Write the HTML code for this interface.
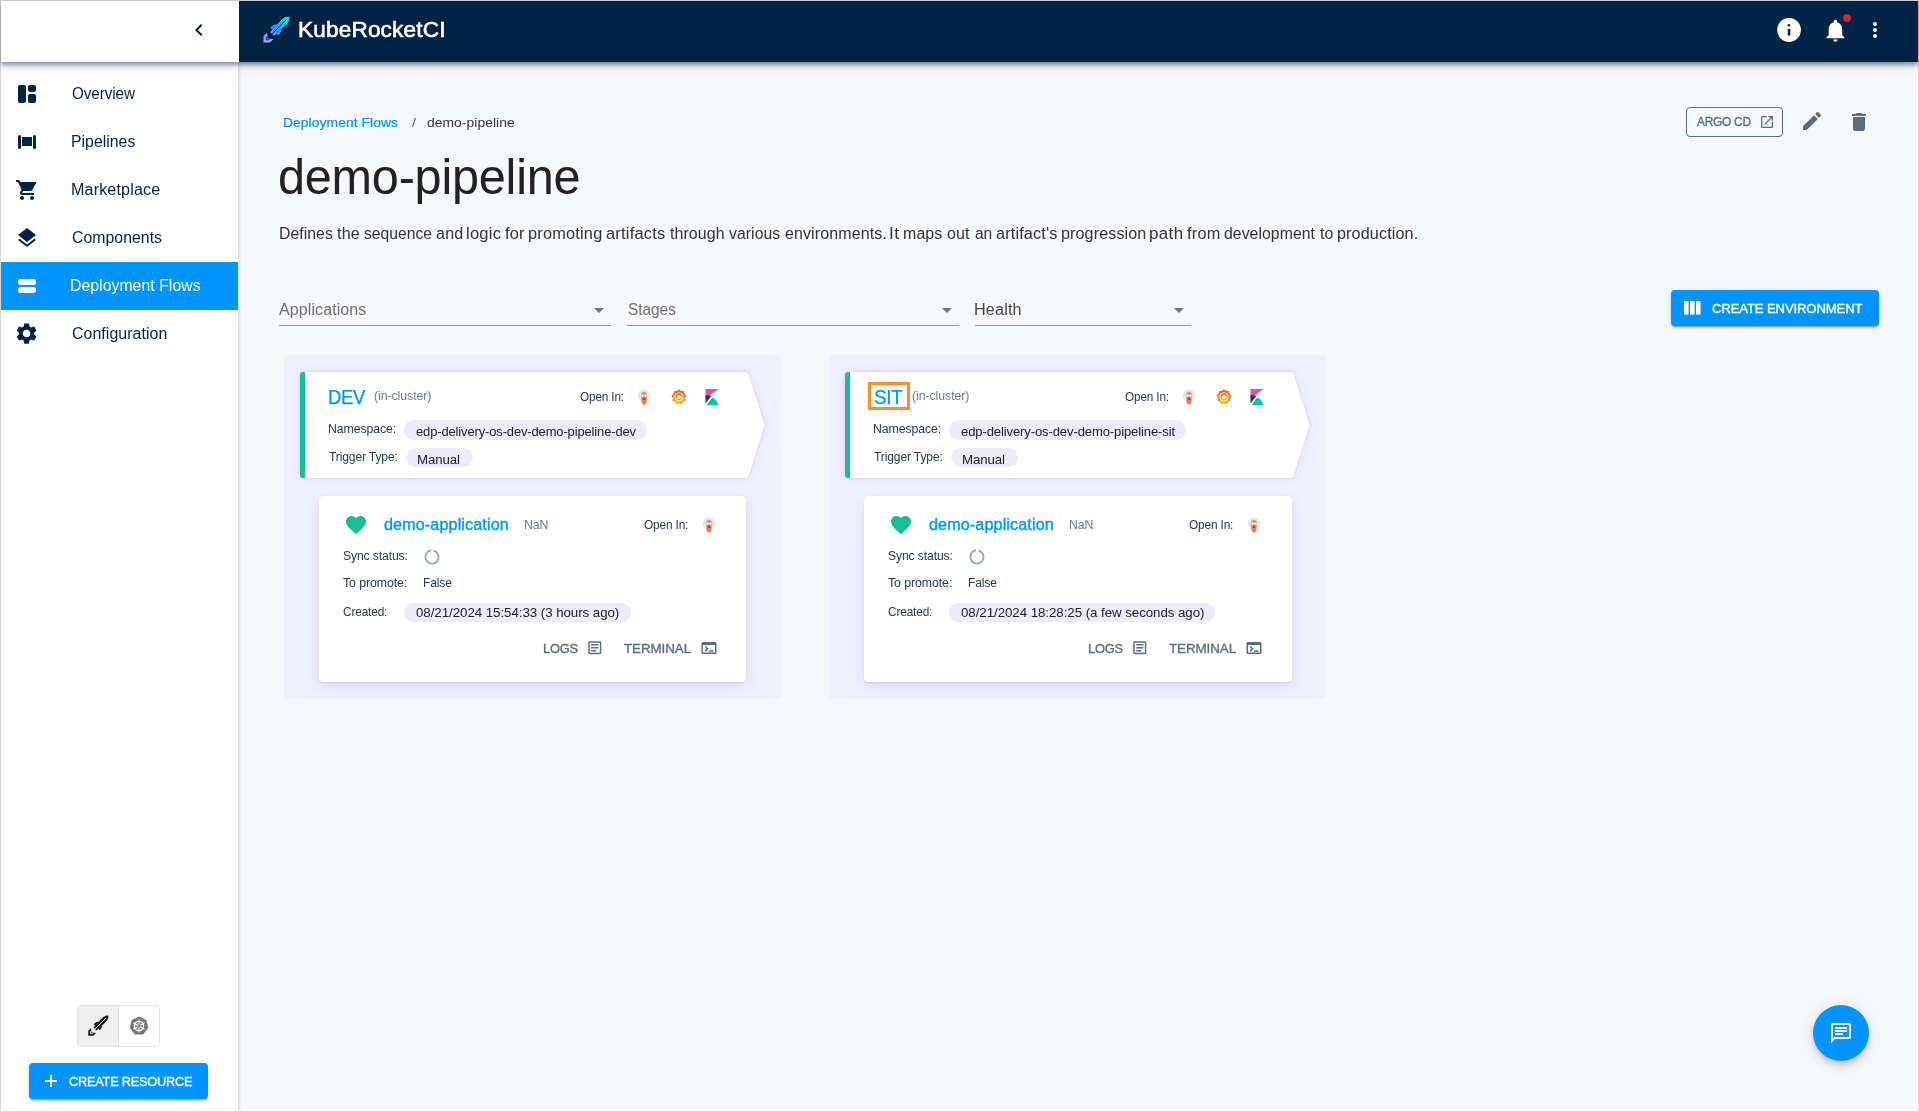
<!DOCTYPE html>
<html><head><meta charset="utf-8"><title>KubeRocketCI</title>
<style>
html,body{margin:0;padding:0}
body{width:1919px;height:1112px;position:relative;overflow:hidden;background:#d9d9d9;font-family:"Liberation Sans", sans-serif}
#frame{position:absolute;left:1px;top:1px;width:1917px;height:1110px;background:#f7f8fc;overflow:hidden}
.a{position:absolute}
.t{position:absolute;white-space:nowrap;font-family:"Liberation Sans", sans-serif}
svg{position:absolute;overflow:visible}
</style></head>
<body>
<div id="frame"></div>
<div class="a" style="left:1px;top:1px;width:237px;height:1110px;background:#fff;border-right:1px solid #e0e0e0"></div>
<div class="a" style="left:239px;top:62px;width:1px;height:1049px;background:#e8e9ee"></div><div class="a" style="left:240px;top:62px;width:1px;height:1049px;background:#f0f1f6"></div><div class="a" style="left:241px;top:62px;width:1px;height:1049px;background:#f5f6fb"></div>
<div class="a" style="left:1px;top:262px;width:237px;height:48px;background:#0094ff"></div>
<div class="a" style="left:1px;top:1px;width:1917px;height:61px;box-shadow:0px 3px 4px 0px rgba(1,25,60,0.35),0px 3px 10px 0px rgba(1,25,60,0.22);background:#fff"></div>
<div class="a" style="left:239px;top:1px;width:1679px;height:61px;background:#012345"></div>
<svg style="left:187px;top:18px" width="24" height="24" viewBox="0 0 24 24"><path fill="#012345" d="M15.41 7.41 14 6l-6 6 6 6 1.41-1.41L10.83 12z"/></svg>
<svg style="left:15px;top:82px" width="24" height="24" viewBox="0 0 24 24"><path fill="#012345" d="M9 21H5c-1.1 0-2-.9-2-2V5c0-1.1.9-2 2-2h4c1.1 0 2 .9 2 2v14c0 1.1-.9 2-2 2zm6 0h4c1.1 0 2-.9 2-2v-5c0-1.1-.9-2-2-2h-4c-1.1 0-2 .9-2 2v5c0 1.1.9 2 2 2zm6-13V5c0-1.1-.9-2-2-2h-4c-1.1 0-2 .9-2 2v3c0 1.1.9 2 2 2h4c1.1 0 2-.9 2-2z"/></svg>
<svg style="left:0px;top:0px" width="1" height="1" viewBox="0 0 1 1"></svg>
<div class="a" style="left:17.6px;top:135px;width:3px;height:14px;border-radius:1.5px;background:#012345"></div>
<div class="a" style="left:22.3px;top:137.4px;width:9.4px;height:9px;background:#012345"></div>
<div class="a" style="left:33.3px;top:135px;width:3px;height:14px;border-radius:1.5px;background:#012345"></div>
<svg style="left:15px;top:178px" width="24" height="24" viewBox="0 0 24 24"><path fill="#012345" d="M7 18c-1.1 0-1.99.9-1.99 2S5.9 22 7 22s2-.9 2-2-.9-2-2-2zM1 2v2h2l3.6 7.59-1.35 2.45c-.16.28-.25.61-.25.96 0 1.1.9 2 2 2h12v-2H7.42c-.14 0-.25-.11-.25-.25l.03-.12.9-1.63h7.45c.75 0 1.41-.41 1.75-1.03l3.58-6.49c.08-.14.12-.31.12-.48 0-.55-.45-1-1-1H5.21l-.94-2H1zm16 16c-1.1 0-1.99.9-1.99 2s.89 2 1.99 2 2-.9 2-2-.9-2-2-2z"/></svg>
<svg style="left:15px;top:226px" width="24" height="24" viewBox="0 0 24 24"><path fill="#012345" d="M11.99 18.54l-7.37-5.73L3 14.07l9 7 9-7-1.63-1.27-7.38 5.74zM12 16l7.36-5.73L21 9l-9-7-9 7 1.63 1.27L12 16z"/></svg>
<div class="a" style="left:18px;top:279px;width:18px;height:6px;border-radius:2.5px;background:#fff"></div>
<div class="a" style="left:18px;top:287px;width:18px;height:6px;border-radius:2.5px;background:#fff"></div>
<svg style="left:14.4px;top:321.4px" width="25.2" height="25.2" viewBox="0 0 24 24"><path fill="#012345" d="M19.14 12.94c.04-.3.06-.61.06-.94 0-.32-.02-.64-.07-.94l2.03-1.58c.18-.14.23-.41.12-.61l-1.92-3.32c-.12-.22-.37-.29-.59-.22l-2.39.96c-.5-.38-1.03-.7-1.62-.94l-.36-2.54c-.04-.24-.24-.41-.48-.41h-3.84c-.24 0-.43.17-.47.41l-.36 2.54c-.59.24-1.13.57-1.62.94l-2.39-.96c-.22-.08-.47 0-.59.22L2.74 8.87c-.12.21-.08.47.12.61l2.03 1.58c-.05.3-.09.63-.09.94s.02.64.07.94l-2.03 1.58c-.18.14-.23.41-.12.61l1.92 3.32c.12.22.37.29.59.22l2.39-.96c.5.38 1.03.7 1.62.94l.36 2.54c.05.24.24.41.48.41h3.84c.24 0 .44-.17.47-.41l.36-2.54c.59-.24 1.13-.56 1.62-.94l2.39.96c.22.08.47 0 .59-.22l1.92-3.32c.12-.22.07-.47-.12-.61l-2.01-1.58zM12 15.6c-1.98 0-3.6-1.62-3.6-3.6s1.62-3.6 3.6-3.6 3.6 1.62 3.6 3.6-1.62 3.6-3.6 3.6z"/></svg>
<div class="a" style="left:77px;top:1005px;width:81px;height:40px;border:1px solid #e4e5ea;border-radius:4px;overflow:hidden;background:#fff"><div class="a" style="left:0;top:0;width:40px;height:40px;background:#eeeeee;border-right:1px solid #dcdde3"></div></div>
<svg style="left:80px;top:1008px" width="36" height="36" viewBox="0 0 36 36">
<g transform="translate(18 18) rotate(45) scale(0.78)">
<path d="M0 -18.5 C3 -17 3.6 -13 3.4 -9 L2.8 5.5 L-2.8 5.5 L-3.4 -9 C-3.6 -13 -3 -17 0 -18.5Z" fill="#1a1a1a"/>
<path d="M-2.8 -4.5 C-5 -3.5 -5.6 -0.5 -5.4 2.5 L-2.8 2Z M2.8 -4.5 C5 -3.5 5.6 -0.5 5.4 2.5 L2.8 2Z" fill="#1a1a1a"/>
<path d="M0 -14.5 L0 7" stroke="#efefef" stroke-width="1.1"/>
<path d="M-4.6 8 L-4.6 13 L0 17.8 L4.6 13 L4.6 8 L0 12Z" fill="#1a1a1a"/>
<path d="M-2.2 11.5 L0 13.8 L2.2 11.5" stroke="#efefef" stroke-width="1" fill="none"/>
</g></svg>
<svg style="left:129px;top:1016px" width="20" height="20" viewBox="0 0 20 20">
<polygon points="10,0.5 17.4,4.1 19.2,12.1 14.1,18.5 5.9,18.5 0.8,12.1 2.6,4.1" fill="#777"/>
<circle cx="10" cy="10" r="4.6" fill="none" stroke="#fff" stroke-width="1.3"/>
<g stroke="#fff" stroke-width="1.1"><line x1="10" y1="3.6" x2="10" y2="16.4"/><line x1="4.5" y1="6.8" x2="15.5" y2="13.2"/><line x1="4.5" y1="13.2" x2="15.5" y2="6.8"/></g>
<circle cx="10" cy="10" r="1.4" fill="#777"/>
</svg>
<div class="a" style="left:29px;top:1063px;width:179px;height:36px;border-radius:4px;background:#0094ff;box-shadow:0px 3px 1px -2px rgba(0,0,0,0.2),0px 2px 2px 0px rgba(0,0,0,0.14),0px 1px 5px 0px rgba(0,0,0,0.12)"></div>
<div class="a" style="left:45px;top:1080.2px;width:12px;height:1.8px;background:#fff"></div>
<div class="a" style="left:50.1px;top:1075px;width:1.8px;height:12px;background:#fff"></div>
<svg style="left:258px;top:12px" width="36" height="36" viewBox="0 0 36 36">
<defs><linearGradient id="rg" gradientUnits="userSpaceOnUse" x1="0" y1="18" x2="0" y2="-18"><stop offset="0" stop-color="#b59cf2"/><stop offset="0.3" stop-color="#8f95ff"/><stop offset="0.5" stop-color="#2f8dff"/><stop offset="1" stop-color="#00ecff"/></linearGradient></defs>
<g transform="translate(18 18) rotate(45)">
<path d="M0 -18.5 C3 -17 3.6 -13 3.4 -9 L2.8 5.5 L-2.8 5.5 L-3.4 -9 C-3.6 -13 -3 -17 0 -18.5Z" fill="url(#rg)"/>
<path d="M-2.8 -4.5 C-5 -3.5 -5.6 -0.5 -5.4 2.5 L-2.8 2Z M2.8 -4.5 C5 -3.5 5.6 -0.5 5.4 2.5 L2.8 2Z" fill="url(#rg)"/>
<path d="M0 -14.5 L0 7" stroke="#012345" stroke-width="0.9"/>
<path d="M-4.6 8 L-4.6 13 L0 17.8 L4.6 13 L4.6 8 L0 12Z" fill="url(#rg)"/>
<path d="M-2.2 11.5 L0 13.8 L2.2 11.5" stroke="#012345" stroke-width="0.9" fill="none"/>
</g></svg>
<svg style="left:1777px;top:18px" width="24" height="24" viewBox="0 0 24 24"><circle cx="12" cy="12" r="11.9" fill="#fff"/><circle cx="12" cy="7.3" r="1.3" fill="#012345"/><rect x="10.8" y="11" width="2.5" height="6.6" fill="#012345"/></svg>
<svg style="left:1821.6px;top:16.9px" width="26.9" height="26.9" viewBox="0 0 24 24"><path fill="#fff" d="M12 22c1.1 0 2-.9 2-2h-4c0 1.1.89 2 2 2zm6-6v-5c0-3.07-1.64-5.64-4.5-6.32V4c0-.83-.67-1.5-1.5-1.5s-1.5.67-1.5 1.5v.68C7.63 5.36 6 7.92 6 11v5l-2 2v1h16v-1l-2-2z"/></svg>
<div class="a" style="left:1843px;top:14px;width:8px;height:8px;border-radius:50%;background:#c9282d"></div>
<svg style="left:1863px;top:18px" width="24" height="24" viewBox="0 0 24 24"><path fill="#fff" d="M12 8c1.1 0 2-.9 2-2s-.9-2-2-2-2 .9-2 2 .9 2 2 2zm0 2c-1.1 0-2 .9-2 2s.9 2 2 2 2-.9 2-2-.9-2-2-2zm0 6c-1.1 0-2 .9-2 2s.9 2 2 2 2-.9 2-2-.9-2-2-2z"/></svg>
<div class="a" style="left:1686px;top:107px;width:95px;height:28px;border:1px solid #596d80;border-radius:4px"></div>
<svg style="left:1759px;top:113.7px" width="16" height="16" viewBox="0 0 24 24"><path fill="#596d80" d="M19 19H5V5h7V3H5c-1.11 0-2 .9-2 2v14c0 1.1.89 2 2 2h14c1.1 0 2-.9 2-2v-7h-2v7zM14 3v2h3.59l-9.83 9.83 1.41 1.41L19 6.41V10h2V3h-7z"/></svg>
<svg style="left:1799.5px;top:109px" width="24" height="24" viewBox="0 0 24 24"><path fill="#596d80" d="M3 17.46v3.04c0 .28.22.5.5.5h3.04c.13 0 .26-.05.35-.15L17.81 9.94l-3.75-3.75L3.15 17.1c-.1.1-.15.22-.15.36zM20.71 7.04c.39-.39.39-1.02 0-1.41l-2.34-2.34a.9959.9959 0 0 0-1.41 0l-1.83 1.83 3.75 3.75 1.83-1.83z"/></svg>
<svg style="left:1847px;top:110px" width="24" height="24" viewBox="0 0 24 24"><path fill="#596d80" d="M6 19c0 1.1.9 2 2 2h8c1.1 0 2-.9 2-2V7H6v12zM19 4h-3.5l-1-1h-5l-1 1H5v2h14V4z"/></svg>
<div class="a" style="left:279px;top:325px;width:332px;height:1px;background:#9a9a9a"></div>
<svg style="left:587.3px;top:298px" width="24" height="24" viewBox="0 0 24 24"><path fill="#757575" d="M7 10l5 5 5-5z"/></svg>
<div class="a" style="left:627px;top:325px;width:332px;height:1px;background:#9a9a9a"></div>
<svg style="left:934.9px;top:298px" width="24" height="24" viewBox="0 0 24 24"><path fill="#757575" d="M7 10l5 5 5-5z"/></svg>
<div class="a" style="left:975px;top:325px;width:216px;height:1px;background:#9a9a9a"></div>
<svg style="left:1167.3px;top:298px" width="24" height="24" viewBox="0 0 24 24"><path fill="#757575" d="M7 10l5 5 5-5z"/></svg>
<div class="a" style="left:1671px;top:290px;width:208px;height:36px;border-radius:4px;background:#0094ff;box-shadow:0px 3px 1px -2px rgba(0,0,0,0.2),0px 2px 2px 0px rgba(0,0,0,0.14),0px 1px 5px 0px rgba(0,0,0,0.12)"></div>
<svg style="left:1684.4px;top:301px" width="16.6" height="13.7" viewBox="0 0 16.6 13.7"><rect x="0" y="0" width="4.6" height="13.7" rx="1" fill="#fff"/><rect x="6" y="0" width="4.6" height="13.7" fill="#fff"/><rect x="12" y="0" width="4.6" height="13.7" rx="1" fill="#fff"/></svg>
<div class="a" style="left:1813px;top:1005px;width:56px;height:56px;border-radius:50%;background:#0094ff;box-shadow:0px 3px 5px -1px rgba(0,0,0,0.14),0px 6px 10px 0px rgba(0,0,0,0.10),0px 1px 18px 0px rgba(0,0,0,0.08)"></div>
<svg style="left:1829px;top:1021px" width="24" height="24" viewBox="0 0 24 24"><path fill="#fff" d="M4 4h16v12H5.17L4 17.17V4m0-2c-1.1 0-1.99.9-1.99 2L2 22l4-4h14c1.1 0 2-.9 2-2V4c0-1.1-.9-2-2-2H4zm2 10h8v2H6v-2zm0-3h12v2H6V9zm0-3h12v2H6V6z"/></svg>
<div class="a" style="left:284px;top:355px;width:497px;height:344px;background:#f0efff;border-radius:4px"></div>
<svg style="left:300px;top:372px;filter:drop-shadow(0px 0px 1px rgba(0,0,0,0.13)) drop-shadow(0px 0px 6px rgba(90,80,210,0.10))" width="465" height="106" viewBox="0 0 465 106">
<path d="M3 0 L445 0 Q448 0 449 3 L464 51 Q465 53 464 55 L449 103 Q448 106 445 106 L3 106 Q0 106 0 103 L0 3 Q0 0 3 0Z" fill="#fff"/>
<path d="M3 0 L5 0 L5 106 L3 106 Q0 106 0 103 L0 3 Q0 0 3 0Z" fill="#18bf94"/>
</svg>
<svg style="left:637px;top:388.5px" width="14" height="16" viewBox="0 0 14 16">
<circle cx="7" cy="6.5" r="6.2" fill="#d7ecf7"/>
<path d="M4.2 5 C4.2 2.6 9.8 2.6 9.8 5 L9.6 11 C9.6 13 8.6 15.8 7 15.8 C5.4 15.8 4.4 13 4.4 11Z" fill="#ef7b4d"/>
<circle cx="5.6" cy="6.6" r="1.3" fill="#fff"/><circle cx="8.4" cy="6.6" r="1.3" fill="#fff"/>
<ellipse cx="7" cy="10" rx="1" ry="0.7" fill="#3b2a25"/>
</svg>
<svg style="left:670.5px;top:389px" width="16" height="16" viewBox="0 0 16 16">
<defs><linearGradient id="gg670.5" x1="0" y1="0" x2="0" y2="1"><stop offset="0" stop-color="#f05a28"/><stop offset="1" stop-color="#fbb80a"/></linearGradient></defs>
<polygon points="8.00,0.30 10.15,2.08 12.95,2.10 13.46,4.85 15.58,6.66 14.20,9.09 14.67,11.85 12.05,12.83 10.63,15.24 8.00,14.30 5.37,15.24 3.95,12.83 1.33,11.85 1.80,9.09 0.42,6.66 2.54,4.85 3.05,2.10 5.85,2.08" fill="url(#gg670.5)"/>
<circle cx="8" cy="8" r="4.6" fill="#fff"/>
<path d="M10.6 6.6 A2.9 2.9 0 1 0 10.9 8.6" stroke="url(#gg670.5)" stroke-width="1.6" fill="none"/>
<path d="M12.7 6.2 L10.2 7.4 L11.4 9Z" fill="url(#gg670.5)"/>
<circle cx="8" cy="8" r="0.9" fill="#fff"/>
</svg>
<svg style="left:704.5px;top:389px" width="14" height="16" viewBox="0 0 14 16">
<polygon points="0.5,0 13.5,0 0.5,9.6" fill="#f04e98"/>
<polygon points="0.5,6 6.6,6.8 0.5,14.6" fill="#343741"/>
<path d="M1.6 16 L7.3 8.6 C10 9.6 12.2 12 13.2 16Z" fill="#00bfb3"/>
</svg>
<div class="a" style="left:404.4px;top:420.4px;width:243px;height:19.4px;border-radius:10px;background:#ecebfb"></div>
<div class="a" style="left:406.2px;top:448.3px;width:66.5px;height:19.2px;border-radius:10px;background:#ecebfb"></div>
<div class="a" style="left:319px;top:496px;width:427px;height:186px;background:#fff;border-radius:4px;box-shadow:0 0 1px rgba(0,0,0,0.14),0 2px 2px -1px rgba(0,0,0,0.08),0 4px 12px rgba(80,70,190,0.13)"></div>
<svg style="left:343.5px;top:513px" width="24" height="24" viewBox="0 0 24 24"><path fill="#18bf94" d="m12 21.35-1.45-1.32C5.4 15.36 2 12.28 2 8.5 2 5.42 4.42 3 7.5 3c1.74 0 3.41.81 4.5 2.09C13.09 3.81 14.76 3 16.5 3 19.58 3 22 5.42 22 8.5c0 3.78-3.4 6.86-8.55 11.54L12 21.35z"/></svg>
<svg style="left:702px;top:516.5px" width="14" height="16" viewBox="0 0 14 16">
<circle cx="7" cy="6.5" r="6.2" fill="#d7ecf7"/>
<path d="M4.2 5 C4.2 2.6 9.8 2.6 9.8 5 L9.6 11 C9.6 13 8.6 15.8 7 15.8 C5.4 15.8 4.4 13 4.4 11Z" fill="#ef7b4d"/>
<circle cx="5.6" cy="6.6" r="1.3" fill="#fff"/><circle cx="8.4" cy="6.6" r="1.3" fill="#fff"/>
<ellipse cx="7" cy="10" rx="1" ry="0.7" fill="#3b2a25"/>
</svg>
<svg style="left:424px;top:548.5px" width="16" height="16" viewBox="0 0 16 16"><circle cx="8" cy="8" r="6.6" fill="none" stroke="#9aa3b0" stroke-width="1.8" stroke-dasharray="38.5 3" transform="rotate(-75 8 8)"/></svg>
<div class="a" style="left:403.9px;top:602.5px;width:227px;height:19.5px;border-radius:10px;background:#ecebfb"></div>
<svg style="left:586.3px;top:639.2px" width="17.5" height="17.5" viewBox="0 0 24 24"><path fill="#596d80" d="M19 3H5c-1.1 0-2 .9-2 2v14c0 1.1.9 2 2 2h14c1.1 0 2-.9 2-2V5c0-1.1-.9-2-2-2zm0 16H5V5h14v14zM7 7h10v2H7zm0 4h10v2H7zm0 4h7v2H7z"/></svg>
<svg style="left:700.2px;top:638.9px" width="18" height="18" viewBox="0 0 24 24"><path fill="#596d80" d="M20 4H4c-1.11 0-2 .9-2 2v12c0 1.1.89 2 2 2h16c1.1 0 2-.9 2-2V6c0-1.1-.89-2-2-2zm0 14H4V8h16v10zm-2-1h-6v-2h6v2zM7.5 17l-1.41-1.41L8.67 13l-2.59-2.59L7.5 9l4 4-4 4z"/></svg>
<div class="a" style="left:829px;top:355px;width:497px;height:344px;background:#f0efff;border-radius:4px"></div>
<svg style="left:845px;top:372px;filter:drop-shadow(0px 0px 1px rgba(0,0,0,0.13)) drop-shadow(0px 0px 6px rgba(90,80,210,0.10))" width="465" height="106" viewBox="0 0 465 106">
<path d="M3 0 L445 0 Q448 0 449 3 L464 51 Q465 53 464 55 L449 103 Q448 106 445 106 L3 106 Q0 106 0 103 L0 3 Q0 0 3 0Z" fill="#fff"/>
<path d="M3 0 L5 0 L5 106 L3 106 Q0 106 0 103 L0 3 Q0 0 3 0Z" fill="#18bf94"/>
</svg>
<svg style="left:1182px;top:388.5px" width="14" height="16" viewBox="0 0 14 16">
<circle cx="7" cy="6.5" r="6.2" fill="#d7ecf7"/>
<path d="M4.2 5 C4.2 2.6 9.8 2.6 9.8 5 L9.6 11 C9.6 13 8.6 15.8 7 15.8 C5.4 15.8 4.4 13 4.4 11Z" fill="#ef7b4d"/>
<circle cx="5.6" cy="6.6" r="1.3" fill="#fff"/><circle cx="8.4" cy="6.6" r="1.3" fill="#fff"/>
<ellipse cx="7" cy="10" rx="1" ry="0.7" fill="#3b2a25"/>
</svg>
<svg style="left:1215.5px;top:389px" width="16" height="16" viewBox="0 0 16 16">
<defs><linearGradient id="gg1215.5" x1="0" y1="0" x2="0" y2="1"><stop offset="0" stop-color="#f05a28"/><stop offset="1" stop-color="#fbb80a"/></linearGradient></defs>
<polygon points="8.00,0.30 10.15,2.08 12.95,2.10 13.46,4.85 15.58,6.66 14.20,9.09 14.67,11.85 12.05,12.83 10.63,15.24 8.00,14.30 5.37,15.24 3.95,12.83 1.33,11.85 1.80,9.09 0.42,6.66 2.54,4.85 3.05,2.10 5.85,2.08" fill="url(#gg1215.5)"/>
<circle cx="8" cy="8" r="4.6" fill="#fff"/>
<path d="M10.6 6.6 A2.9 2.9 0 1 0 10.9 8.6" stroke="url(#gg1215.5)" stroke-width="1.6" fill="none"/>
<path d="M12.7 6.2 L10.2 7.4 L11.4 9Z" fill="url(#gg1215.5)"/>
<circle cx="8" cy="8" r="0.9" fill="#fff"/>
</svg>
<svg style="left:1249.5px;top:389px" width="14" height="16" viewBox="0 0 14 16">
<polygon points="0.5,0 13.5,0 0.5,9.6" fill="#f04e98"/>
<polygon points="0.5,6 6.6,6.8 0.5,14.6" fill="#343741"/>
<path d="M1.6 16 L7.3 8.6 C10 9.6 12.2 12 13.2 16Z" fill="#00bfb3"/>
</svg>
<div class="a" style="left:949.4px;top:420.4px;width:237px;height:19.4px;border-radius:10px;background:#ecebfb"></div>
<div class="a" style="left:951.2px;top:448.3px;width:66.5px;height:19.2px;border-radius:10px;background:#ecebfb"></div>
<div class="a" style="left:864px;top:496px;width:428px;height:186px;background:#fff;border-radius:4px;box-shadow:0 0 1px rgba(0,0,0,0.14),0 2px 2px -1px rgba(0,0,0,0.08),0 4px 12px rgba(80,70,190,0.13)"></div>
<svg style="left:888.5px;top:513px" width="24" height="24" viewBox="0 0 24 24"><path fill="#18bf94" d="m12 21.35-1.45-1.32C5.4 15.36 2 12.28 2 8.5 2 5.42 4.42 3 7.5 3c1.74 0 3.41.81 4.5 2.09C13.09 3.81 14.76 3 16.5 3 19.58 3 22 5.42 22 8.5c0 3.78-3.4 6.86-8.55 11.54L12 21.35z"/></svg>
<svg style="left:1247px;top:516.5px" width="14" height="16" viewBox="0 0 14 16">
<circle cx="7" cy="6.5" r="6.2" fill="#d7ecf7"/>
<path d="M4.2 5 C4.2 2.6 9.8 2.6 9.8 5 L9.6 11 C9.6 13 8.6 15.8 7 15.8 C5.4 15.8 4.4 13 4.4 11Z" fill="#ef7b4d"/>
<circle cx="5.6" cy="6.6" r="1.3" fill="#fff"/><circle cx="8.4" cy="6.6" r="1.3" fill="#fff"/>
<ellipse cx="7" cy="10" rx="1" ry="0.7" fill="#3b2a25"/>
</svg>
<svg style="left:969px;top:548.5px" width="16" height="16" viewBox="0 0 16 16"><circle cx="8" cy="8" r="6.6" fill="none" stroke="#9aa3b0" stroke-width="1.8" stroke-dasharray="38.5 3" transform="rotate(-75 8 8)"/></svg>
<div class="a" style="left:948.9px;top:602.5px;width:266.4px;height:19.5px;border-radius:10px;background:#ecebfb"></div>
<svg style="left:1131.3px;top:639.2px" width="17.5" height="17.5" viewBox="0 0 24 24"><path fill="#596d80" d="M19 3H5c-1.1 0-2 .9-2 2v14c0 1.1.9 2 2 2h14c1.1 0 2-.9 2-2V5c0-1.1-.9-2-2-2zm0 16H5V5h14v14zM7 7h10v2H7zm0 4h10v2H7zm0 4h7v2H7z"/></svg>
<svg style="left:1245.2px;top:638.9px" width="18" height="18" viewBox="0 0 24 24"><path fill="#596d80" d="M20 4H4c-1.11 0-2 .9-2 2v12c0 1.1.89 2 2 2h16c1.1 0 2-.9 2-2V6c0-1.1-.89-2-2-2zm0 14H4V8h16v10zm-2-1h-6v-2h6v2zM7.5 17l-1.41-1.41L8.67 13l-2.59-2.59L7.5 9l4 4-4 4z"/></svg>
<div class="a" style="left:868px;top:382px;width:35.5px;height:22.3px;border:3px solid #f7902a"></div>
<div class="t" style="left:71.60px;top:86.00px;font-size:15.6px;line-height:15.6px;font-weight:400;color:#012345;letter-spacing:-0.090px;transform:scaleX(0.9773);transform-origin:0 0;">Overview</div>
<div class="t" style="left:70.59px;top:134.00px;font-size:15.6px;line-height:15.6px;font-weight:400;color:#012345;letter-spacing:0.038px;transform:scaleX(1.0114);transform-origin:0 0;">Pipelines</div>
<div class="t" style="left:70.57px;top:182.00px;font-size:15.6px;line-height:15.6px;font-weight:400;color:#012345;letter-spacing:0.126px;transform:scaleX(1.0345);transform-origin:0 0;">Marketplace</div>
<div class="t" style="left:71.60px;top:230.00px;font-size:15.6px;line-height:15.6px;font-weight:400;color:#012345;letter-spacing:0.053px;transform:scaleX(1.0125);transform-origin:0 0;">Components</div>
<div class="t" style="left:71.60px;top:326.00px;font-size:15.6px;line-height:15.6px;font-weight:400;color:#012345;letter-spacing:0.065px;transform:scaleX(1.0194);transform-origin:0 0;">Configuration</div>
<div class="t" style="left:70.49px;top:278.00px;font-size:15.6px;line-height:15.6px;font-weight:400;color:#ffffff;letter-spacing:0.046px;transform:scaleX(1.0125);transform-origin:0 0;">Deployment Flows</div>
<div class="t" style="left:68.80px;top:1075.30px;font-size:13.65px;line-height:13.65px;font-weight:400;color:#ffffff;letter-spacing:-0.251px;transform:scaleX(0.9365);transform-origin:0 0;-webkit-text-stroke:0.35px #ffffff;">CREATE RESOURCE</div>
<div class="t" style="left:297.72px;top:19.30px;font-size:21.94px;line-height:21.94px;font-weight:400;color:#ffffff;letter-spacing:0.163px;transform:scaleX(1.0294);transform-origin:0 0;-webkit-text-stroke:0.6px #fff;">KubeRocketCI</div>
<div class="t" style="left:283.38px;top:115.50px;font-size:13.65px;line-height:13.65px;font-weight:400;color:#0094ff;letter-spacing:0.055px;transform:scaleX(1.0171);transform-origin:0 0;-webkit-text-stroke:0.2px #0094ff;">Deployment Flows</div>
<div class="t" style="left:412.40px;top:115.50px;font-size:13.65px;line-height:13.65px;font-weight:400;color:#555555;letter-spacing:0.000px;transform:scaleX(1.0001);transform-origin:0 0;">/</div>
<div class="t" style="left:427.40px;top:115.50px;font-size:13.65px;line-height:13.65px;font-weight:400;color:#333333;letter-spacing:0.048px;transform:scaleX(1.0156);transform-origin:0 0;">demo-pipeline</div>
<div class="t" style="left:278.34px;top:153.20px;font-size:49.73px;line-height:49.73px;font-weight:400;color:#222222;letter-spacing:-0.241px;transform:scaleX(0.9777);transform-origin:0 0;">demo-pipeline</div>
<div class="t" style="left:278.59px;top:225.80px;font-size:15.6px;line-height:15.6px;font-weight:400;color:#333333;letter-spacing:0.047px;transform:scaleX(1.0124);transform-origin:0 0;">Defines</div>
<div class="t" style="left:337.20px;top:225.80px;font-size:15.6px;line-height:15.6px;font-weight:400;color:#333333;letter-spacing:0.152px;transform:scaleX(1.0329);transform-origin:0 0;">the</div>
<div class="t" style="left:363.80px;top:225.80px;font-size:15.6px;line-height:15.6px;font-weight:400;color:#333333;letter-spacing:0.015px;transform:scaleX(1.0036);transform-origin:0 0;">sequence</div>
<div class="t" style="left:435.70px;top:225.80px;font-size:15.6px;line-height:15.6px;font-weight:400;color:#333333;letter-spacing:0.176px;transform:scaleX(1.0317);transform-origin:0 0;">and</div>
<div class="t" style="left:465.74px;top:225.80px;font-size:15.6px;line-height:15.6px;font-weight:400;color:#333333;letter-spacing:0.210px;transform:scaleX(1.0602);transform-origin:0 0;">logic</div>
<div class="t" style="left:505.40px;top:225.80px;font-size:15.6px;line-height:15.6px;font-weight:400;color:#333333;letter-spacing:0.199px;transform:scaleX(1.0498);transform-origin:0 0;">for</div>
<div class="t" style="left:528.25px;top:225.80px;font-size:15.6px;line-height:15.6px;font-weight:400;color:#333333;letter-spacing:0.182px;transform:scaleX(1.0484);transform-origin:0 0;">promoting</div>
<div class="t" style="left:606.30px;top:225.80px;font-size:15.6px;line-height:15.6px;font-weight:400;color:#333333;letter-spacing:0.174px;transform:scaleX(1.0568);transform-origin:0 0;">artifacts</div>
<div class="t" style="left:670.20px;top:225.80px;font-size:15.6px;line-height:15.6px;font-weight:400;color:#333333;letter-spacing:0.085px;transform:scaleX(1.0225);transform-origin:0 0;">through</div>
<div class="t" style="left:728.70px;top:225.80px;font-size:15.6px;line-height:15.6px;font-weight:400;color:#333333;letter-spacing:0.047px;transform:scaleX(1.0128);transform-origin:0 0;">various</div>
<div class="t" style="left:784.70px;top:225.80px;font-size:15.6px;line-height:15.6px;font-weight:400;color:#333333;letter-spacing:0.096px;transform:scaleX(1.0273);transform-origin:0 0;">environments.</div>
<div class="t" style="left:888.60px;top:225.80px;font-size:15.6px;line-height:15.6px;font-weight:400;color:#333333;letter-spacing:0.399px;transform:scaleX(1.1042);transform-origin:0 0;">It</div>
<div class="t" style="left:902.88px;top:225.80px;font-size:15.6px;line-height:15.6px;font-weight:400;color:#333333;letter-spacing:0.118px;transform:scaleX(1.0217);transform-origin:0 0;">maps</div>
<div class="t" style="left:947.00px;top:225.80px;font-size:15.6px;line-height:15.6px;font-weight:400;color:#333333;letter-spacing:0.130px;transform:scaleX(1.0266);transform-origin:0 0;">out</div>
<div class="t" style="left:974.80px;top:225.80px;font-size:15.6px;line-height:15.6px;font-weight:400;color:#333333;letter-spacing:-0.022px;transform:scaleX(0.9970);transform-origin:0 0;">an</div>
<div class="t" style="left:996.00px;top:225.80px;font-size:15.6px;line-height:15.6px;font-weight:400;color:#333333;letter-spacing:0.127px;transform:scaleX(1.0447);transform-origin:0 0;">artifact&#x27;s</div>
<div class="t" style="left:1061.07px;top:225.80px;font-size:15.6px;line-height:15.6px;font-weight:400;color:#333333;letter-spacing:0.113px;transform:scaleX(1.0322);transform-origin:0 0;">progression</div>
<div class="t" style="left:1149.12px;top:225.80px;font-size:15.6px;line-height:15.6px;font-weight:400;color:#333333;letter-spacing:0.367px;transform:scaleX(1.0845);transform-origin:0 0;">path</div>
<div class="t" style="left:1187.00px;top:225.80px;font-size:15.6px;line-height:15.6px;font-weight:400;color:#333333;letter-spacing:0.205px;transform:scaleX(1.0460);transform-origin:0 0;">from</div>
<div class="t" style="left:1223.80px;top:225.80px;font-size:15.6px;line-height:15.6px;font-weight:400;color:#333333;letter-spacing:0.050px;transform:scaleX(1.0127);transform-origin:0 0;">development</div>
<div class="t" style="left:1320.00px;top:225.80px;font-size:15.6px;line-height:15.6px;font-weight:400;color:#333333;letter-spacing:0.111px;transform:scaleX(1.0192);transform-origin:0 0;">to</div>
<div class="t" style="left:1337.26px;top:225.80px;font-size:15.6px;line-height:15.6px;font-weight:400;color:#333333;letter-spacing:0.118px;transform:scaleX(1.0360);transform-origin:0 0;">production.</div>
<div class="t" style="left:279.30px;top:302.20px;font-size:15.6px;line-height:15.6px;font-weight:400;color:#6f6f6f;letter-spacing:0.089px;transform:scaleX(1.0265);transform-origin:0 0;">Applications</div>
<div class="t" style="left:627.50px;top:302.00px;font-size:15.6px;line-height:15.6px;font-weight:400;color:#6f6f6f;letter-spacing:-0.039px;transform:scaleX(0.9906);transform-origin:0 0;">Stages</div>
<div class="t" style="left:974.16px;top:302.20px;font-size:15.6px;line-height:15.6px;font-weight:400;color:#454545;letter-spacing:0.147px;transform:scaleX(1.0383);transform-origin:0 0;">Health</div>
<div class="t" style="left:1696.60px;top:116.30px;font-size:12.67px;line-height:12.67px;font-weight:400;color:#596d80;letter-spacing:-0.248px;transform:scaleX(0.9383);transform-origin:0 0;-webkit-text-stroke:0.35px #596d80;">ARGO CD</div>
<div class="t" style="left:1711.50px;top:302.10px;font-size:13.65px;line-height:13.65px;font-weight:400;color:#ffffff;letter-spacing:-0.147px;transform:scaleX(0.9626);transform-origin:0 0;-webkit-text-stroke:0.35px #ffffff;">CREATE ENVIRONMENT</div>
<div class="t" style="left:328.25px;top:388.00px;font-size:19.5px;line-height:19.5px;font-weight:400;color:#0094ff;letter-spacing:-0.393px;transform:scaleX(0.9513);transform-origin:0 0;-webkit-text-stroke:0.25px #0094ff;">DEV</div>
<div class="t" style="left:374.30px;top:390.20px;font-size:12.67px;line-height:12.67px;font-weight:400;color:#6b7b8c;letter-spacing:-0.063px;transform:scaleX(0.9721);transform-origin:0 0;">(in-cluster)</div>
<div class="t" style="left:579.80px;top:390.50px;font-size:12.67px;line-height:12.67px;font-weight:400;color:#223a52;letter-spacing:-0.188px;transform:scaleX(0.9330);transform-origin:0 0;">Open In:</div>
<div class="t" style="left:328.03px;top:423.20px;font-size:12.67px;line-height:12.67px;font-weight:400;color:#223a52;letter-spacing:-0.096px;transform:scaleX(0.9703);transform-origin:0 0;">Namespace:</div>
<div class="t" style="left:416.00px;top:425.40px;font-size:13.65px;line-height:13.65px;font-weight:400;color:#222222;letter-spacing:-0.136px;transform:scaleX(0.9500);transform-origin:0 0;">edp-delivery-os-dev-demo-pipeline-dev</div>
<div class="t" style="left:329.00px;top:451.00px;font-size:12.67px;line-height:12.67px;font-weight:400;color:#223a52;letter-spacing:-0.124px;transform:scaleX(0.9512);transform-origin:0 0;">Trigger Type:</div>
<div class="t" style="left:417.23px;top:453.30px;font-size:13.65px;line-height:13.65px;font-weight:400;color:#222222;letter-spacing:-0.101px;transform:scaleX(0.9725);transform-origin:0 0;">Manual</div>
<div class="t" style="left:384.30px;top:517.00px;font-size:15.6px;line-height:15.6px;font-weight:400;color:#0094ff;letter-spacing:0.120px;transform:scaleX(1.0348);transform-origin:0 0;-webkit-text-stroke:0.35px #0094ff;">demo-application</div>
<div class="t" style="left:524.33px;top:518.70px;font-size:12.67px;line-height:12.67px;font-weight:400;color:#6b7b8c;letter-spacing:-0.145px;transform:scaleX(0.9715);transform-origin:0 0;">NaN</div>
<div class="t" style="left:644.30px;top:518.70px;font-size:12.67px;line-height:12.67px;font-weight:400;color:#223a52;letter-spacing:-0.176px;transform:scaleX(0.9375);transform-origin:0 0;">Open In:</div>
<div class="t" style="left:343.40px;top:549.50px;font-size:12.67px;line-height:12.67px;font-weight:400;color:#223a52;letter-spacing:-0.107px;transform:scaleX(0.9585);transform-origin:0 0;">Sync status:</div>
<div class="t" style="left:343.40px;top:577.30px;font-size:12.67px;line-height:12.67px;font-weight:400;color:#223a52;letter-spacing:-0.074px;transform:scaleX(0.9733);transform-origin:0 0;">To promote:</div>
<div class="t" style="left:422.75px;top:577.30px;font-size:12.67px;line-height:12.67px;font-weight:400;color:#223a52;letter-spacing:-0.154px;transform:scaleX(0.9501);transform-origin:0 0;">False</div>
<div class="t" style="left:343.40px;top:605.50px;font-size:12.67px;line-height:12.67px;font-weight:400;color:#223a52;letter-spacing:-0.175px;transform:scaleX(0.9376);transform-origin:0 0;">Created:</div>
<div class="t" style="left:415.60px;top:606.30px;font-size:13.65px;line-height:13.65px;font-weight:400;color:#222222;letter-spacing:-0.063px;transform:scaleX(0.9771);transform-origin:0 0;">08/21/2024 15:54:33 (3 hours ago)</div>
<div class="t" style="left:542.56px;top:642.30px;font-size:13.65px;line-height:13.65px;font-weight:400;color:#596d80;letter-spacing:-0.282px;transform:scaleX(0.9440);transform-origin:0 0;-webkit-text-stroke:0.35px #596d80;">LOGS</div>
<div class="t" style="left:624.30px;top:642.30px;font-size:13.65px;line-height:13.65px;font-weight:400;color:#596d80;letter-spacing:-0.080px;transform:scaleX(0.9809);transform-origin:0 0;-webkit-text-stroke:0.35px #596d80;">TERMINAL</div>
<div class="t" style="left:874.20px;top:388.00px;font-size:19.5px;line-height:19.5px;font-weight:400;color:#0094ff;letter-spacing:-0.239px;transform:scaleX(0.9623);transform-origin:0 0;-webkit-text-stroke:0.25px #0094ff;">SIT</div>
<div class="t" style="left:911.70px;top:390.20px;font-size:12.67px;line-height:12.67px;font-weight:400;color:#6b7b8c;letter-spacing:-0.063px;transform:scaleX(0.9721);transform-origin:0 0;">(in-cluster)</div>
<div class="t" style="left:1124.80px;top:390.50px;font-size:12.67px;line-height:12.67px;font-weight:400;color:#223a52;letter-spacing:-0.188px;transform:scaleX(0.9330);transform-origin:0 0;">Open In:</div>
<div class="t" style="left:873.03px;top:423.20px;font-size:12.67px;line-height:12.67px;font-weight:400;color:#223a52;letter-spacing:-0.096px;transform:scaleX(0.9703);transform-origin:0 0;">Namespace:</div>
<div class="t" style="left:961.00px;top:425.40px;font-size:13.65px;line-height:13.65px;font-weight:400;color:#222222;letter-spacing:-0.116px;transform:scaleX(0.9560);transform-origin:0 0;">edp-delivery-os-dev-demo-pipeline-sit</div>
<div class="t" style="left:874.00px;top:451.00px;font-size:12.67px;line-height:12.67px;font-weight:400;color:#223a52;letter-spacing:-0.124px;transform:scaleX(0.9512);transform-origin:0 0;">Trigger Type:</div>
<div class="t" style="left:962.23px;top:453.30px;font-size:13.65px;line-height:13.65px;font-weight:400;color:#222222;letter-spacing:-0.101px;transform:scaleX(0.9725);transform-origin:0 0;">Manual</div>
<div class="t" style="left:929.30px;top:517.00px;font-size:15.6px;line-height:15.6px;font-weight:400;color:#0094ff;letter-spacing:0.120px;transform:scaleX(1.0348);transform-origin:0 0;-webkit-text-stroke:0.35px #0094ff;">demo-application</div>
<div class="t" style="left:1069.33px;top:518.70px;font-size:12.67px;line-height:12.67px;font-weight:400;color:#6b7b8c;letter-spacing:-0.145px;transform:scaleX(0.9715);transform-origin:0 0;">NaN</div>
<div class="t" style="left:1189.30px;top:518.70px;font-size:12.67px;line-height:12.67px;font-weight:400;color:#223a52;letter-spacing:-0.176px;transform:scaleX(0.9375);transform-origin:0 0;">Open In:</div>
<div class="t" style="left:888.40px;top:549.50px;font-size:12.67px;line-height:12.67px;font-weight:400;color:#223a52;letter-spacing:-0.107px;transform:scaleX(0.9585);transform-origin:0 0;">Sync status:</div>
<div class="t" style="left:888.40px;top:577.30px;font-size:12.67px;line-height:12.67px;font-weight:400;color:#223a52;letter-spacing:-0.074px;transform:scaleX(0.9733);transform-origin:0 0;">To promote:</div>
<div class="t" style="left:967.75px;top:577.30px;font-size:12.67px;line-height:12.67px;font-weight:400;color:#223a52;letter-spacing:-0.154px;transform:scaleX(0.9501);transform-origin:0 0;">False</div>
<div class="t" style="left:888.40px;top:605.50px;font-size:12.67px;line-height:12.67px;font-weight:400;color:#223a52;letter-spacing:-0.175px;transform:scaleX(0.9376);transform-origin:0 0;">Created:</div>
<div class="t" style="left:960.60px;top:606.30px;font-size:13.65px;line-height:13.65px;font-weight:400;color:#222222;letter-spacing:-0.065px;transform:scaleX(0.9767);transform-origin:0 0;">08/21/2024 18:28:25 (a few seconds ago)</div>
<div class="t" style="left:1087.56px;top:642.30px;font-size:13.65px;line-height:13.65px;font-weight:400;color:#596d80;letter-spacing:-0.282px;transform:scaleX(0.9440);transform-origin:0 0;-webkit-text-stroke:0.35px #596d80;">LOGS</div>
<div class="t" style="left:1169.30px;top:642.30px;font-size:13.65px;line-height:13.65px;font-weight:400;color:#596d80;letter-spacing:-0.080px;transform:scaleX(0.9809);transform-origin:0 0;-webkit-text-stroke:0.35px #596d80;">TERMINAL</div>
</body></html>
